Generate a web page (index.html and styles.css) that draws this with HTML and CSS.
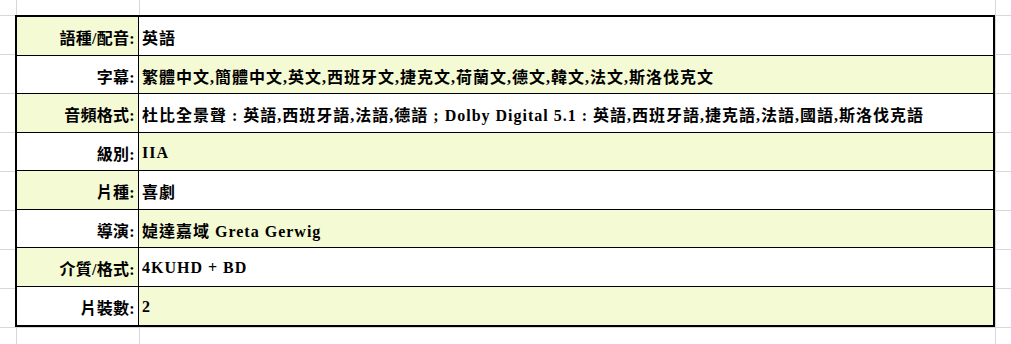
FILE: index.html
```html
<!DOCTYPE html>
<html lang="zh-Hant">
<head>
<meta charset="utf-8">
<title>產品規格</title>
<link rel="stylesheet" href="styles.css">
</head>
<body>
<div class="spec">
  <div class="row odd"><div class="label">語種/配音:</div><div class="value">英語</div></div>
  <div class="row even"><div class="label">字幕:</div><div class="value">繁體中文,簡體中文,英文,西班牙文,捷克文,荷蘭文,德文,韓文,法文,斯洛伐克文</div></div>
  <div class="row odd"><div class="label">音頻格式:</div><div class="value">杜比全景聲 : 英語,西班牙語,法語,德語 ; Dolby Digital 5.1 : 英語,西班牙語,捷克語,法語,國語,斯洛伐克語</div></div>
  <div class="row even"><div class="label">級別:</div><div class="value">IIA</div></div>
  <div class="row odd"><div class="label">片種:</div><div class="value">喜劇</div></div>
  <div class="row even"><div class="label">導演:</div><div class="value">媫達嘉域 Greta Gerwig</div></div>
  <div class="row odd"><div class="label">介質/格式:</div><div class="value">4KUHD + BD</div></div>
  <div class="row even"><div class="label">片裝數:</div><div class="value">2</div></div>
</div>
</body>
</html>
```
FILE: styles.css
```css
html {
  background-color: #ffffff;
  background-image:
    linear-gradient(to right, transparent 16px, #d6d8dc 16px, #d6d8dc 17px, transparent 17px),
    linear-gradient(to right, transparent 139px, #d6d8dc 139px, #d6d8dc 140px, transparent 140px),
    linear-gradient(to right, transparent 995px, #d6d8dc 995px, #d6d8dc 996px, transparent 996px),
    linear-gradient(to bottom, #d6d8dc 0, #d6d8dc 1px, transparent 1px);
  background-size: 100% 100%, 100% 100%, 100% 100%, 100% 39px;
  background-position: 0 0, 0 0, 0 0, 0 15px;
  background-repeat: no-repeat, no-repeat, no-repeat, repeat-y;
  min-height: 100%;
}

body {
  margin: 0;
  padding: 15px 0 0 15px;
  font-family: "Liberation Serif", "Noto Sans CJK TC", serif;
  font-weight: bold;
  font-size: 16px;
  color: #000;
}

.spec {
  box-sizing: border-box;
  width: 980px;
  height: 312px;
  border: 2px solid #000;
  display: grid;
  grid-auto-rows: 1fr;
  background: #fff;
}

.row {
  display: grid;
  grid-template-columns: 122px 1fr;
  border-bottom: 1px solid #000;
}

.row:last-child {
  border-bottom: none;
}

.label,
.value {
  display: flex;
  align-items: center;
  padding-top: 3px;
  white-space: nowrap;
}

.label {
  justify-content: flex-end;
  padding-right: 3px;
  border-right: 1px solid #000;
  letter-spacing: 0.3px;
}

.value {
  padding-left: 3px;
  letter-spacing: 1px;
}

.odd .label,
.even .value {
  background: #f4fad3;
}
```
